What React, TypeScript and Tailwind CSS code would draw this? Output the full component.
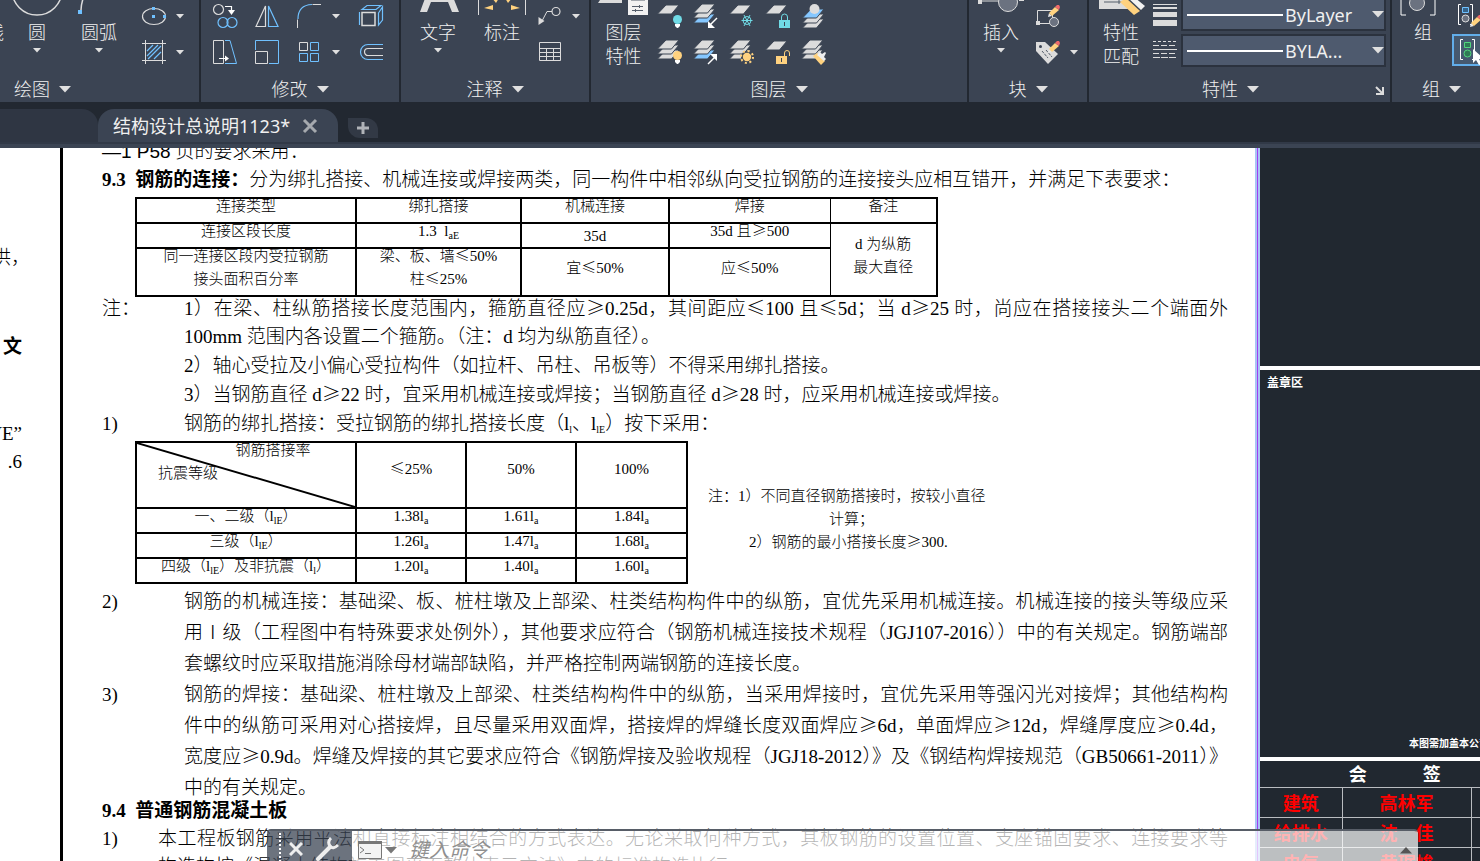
import type { ReactNode } from "react"

const GREY = "#dcdcdc"
const BLUE = "#70c1ff"
const SKY = "#85c7ff"
const AMBER = "#ffd27f"
const CYAN = "#70dbe6"
const BG = "#3b4453"

function Caret({ big = false }: { big?: boolean }) {
    return big ? (
        <svg width="12" height="7" viewBox="0 0 12 7" className="shrink-0"><path d="M0 0h12L6 6.500z" fill="#e0e0e0" /></svg>
    ) : (
        <svg width="8" height="5" viewBox="0 0 8 5" className="shrink-0"><path d="M0 0h8L4 4.500z" fill="#e0e0e0" /></svg>
    )
}

function Icon({ children }: { children: ReactNode }) {
    return (
        <svg width="24" height="24" viewBox="0 0 24 24" fill="none" className="shrink-0 overflow-visible" aria-hidden="true">
            {children}
        </svg>
    )
}

function Tool({ label, className = "w-9", children }: { label: string; className?: string; children: ReactNode }) {
    return (
        <button type="button" aria-label={label} className={`flex h-9 shrink-0 items-center justify-center ${className}`}>
            {children}
        </button>
    )
}

function BigTool({ lines, className, caret = false, children }: { lines: string[]; className: string; caret?: boolean; children?: ReactNode }) {
    return (
        <button type="button" className={`flex shrink-0 flex-col items-center ${className}`}>
            <svg width="60" height="22" viewBox="-30 -2 60 22" fill="none" className="shrink-0" aria-hidden="true">{children}</svg>
            {lines.map((line) => (
                <span key={line} className="block whitespace-nowrap text-lg leading-6">{line}</span>
            ))}
            {caret && <span className="mt-1"><Caret /></span>}
        </button>
    )
}

function Panel({ title, className, titleClass = "justify-center", children, launcher = false }: { title: string; className: string; titleClass?: string; children: ReactNode; launcher?: boolean }) {
    return (
        <section className={`flex h-[102px] shrink-0 flex-col overflow-hidden bg-[#3b4453] ${className}`}>
            <div className="-mt-0.5 flex h-[72px] shrink-0 items-start">{children}</div>
            <div className="relative flex h-8 items-center pt-1.5">
                <button type="button" className={`flex flex-1 items-center gap-[9px] text-lg leading-6 ${titleClass}`}>
                    {title}
                    <Caret big />
                </button>
                {launcher && (
                    <button type="button" aria-label="特性设置" className="absolute right-1.5 top-4">
                        <svg width="9" height="9" viewBox="0 0 9 9" fill="none" stroke={GREY} strokeWidth="2"><path d="M1 1l6 6M8 1v7H1" /></svg>
                    </button>
                )}
            </div>
        </section>
    )
}

// one slanted layer sheet, dy pushes it down the stack
function Sheet({ dy = 0, fill = GREY }: { dy?: number; fill?: string }) {
    return <path d={`M8 ${dy}h13l-7.500 9h-14z`} fill={fill} stroke={BG} strokeWidth="1" />
}

function Sheets({ top = GREY, bottom = GREY }: { top?: string; bottom?: string }) {
    return (
        <>
            <Sheet dy={10} fill={bottom} />
            <Sheet dy={5} />
            <Sheet dy={0} fill={top} />
        </>
    )
}

function Bulb({ fill }: { fill: string }) {
    return (
        <>
            <circle cx="19.500" cy="15.500" r="4.500" fill={fill} />
            <path d="M17 20h5v2l-2 2h-1l-2-2z" fill="#fff" />
        </>
    )
}

function Pencil({ x, y }: { x: number; y: number }) {
    return (
        <g transform={`translate(${x} ${y})`}>
            <path d="M0 12l1-4 3 3z" fill="#e8e8e8" />
            <path d="M1 8l6-6 4 3-7 6z" fill={AMBER} />
            <path d="M7 2l2-2h2l1 2-1 3z" fill="#f06a6a" />
        </g>
    )
}

function DrawPanel() {
    return (
        <Panel title="绘图" className="w-[199px]" titleClass="pl-3.5">
            <div className="flex w-[137px] shrink-0">
                <BigTool lines={["直线"]} className="-ml-8 w-9" />
                <BigTool lines={["圆"]} className="w-[66px]" caret>
                    <circle cx="0" cy="-10" r="25" stroke={GREY} strokeWidth="1.500" />
                </BigTool>
                <BigTool lines={["圆弧"]} className="w-[58px]" caret>
                    <path d="M-15-4Q-18 4-18 10" stroke={GREY} strokeWidth="1.500" />
                    <path d="M-21 10h4v4h-4z" fill={BLUE} />
                </BigTool>
            </div>
            <div className="grid grid-cols-[34px_18px]">
                <Tool label="椭圆" className="w-[34px]">
                    <Icon>
                        <ellipse cx="12" cy="12.500" rx="11.500" ry="8" stroke={GREY} strokeWidth="1.200" />
                        <path d="M10 3h3v3h-3zM10 11h3v3h-3zM21 11h3v3h-3z" fill={BLUE} />
                    </Icon>
                </Tool>
                <Tool label="椭圆选项" className="w-[18px]"><Caret /></Tool>
                <Tool label="图案填充" className="w-[34px]">
                    <Icon>
                        <path d="M0 3.500h24M0 20.500h24M3.500 0v24M20.500 0v24" stroke={GREY} />
                        <path d="M5 11l6-6M5 16L16 5M6 19L19 6M12 19l7-7" stroke={BLUE} strokeWidth="1.200" />
                    </Icon>
                </Tool>
                <Tool label="填充选项" className="w-[18px]"><Caret /></Tool>
            </div>
        </Panel>
    )
}

function ModifyPanel() {
    return (
        <Panel title="修改" className="w-[198px]">
            <div className="ml-1 grid grid-cols-[40px_44px_40px_14px_56px]">
                <Tool label="复制" className="w-10">
                    <Icon>
                        <circle cx="5.500" cy="5.500" r="5" stroke={GREY} strokeWidth="1.200" />
                        <circle cx="10" cy="18.500" r="5" stroke={BLUE} strokeWidth="1.200" />
                        <circle cx="19" cy="18.500" r="5" stroke={BLUE} strokeWidth="1.200" />
                        <path d="M12 2.500h6.500V8" stroke="#fff" strokeWidth="1.200" />
                        <path d="M15 6h7l-3.500 5z" fill="#fff" />
                    </Icon>
                </Tool>
                <Tool label="镜像" className="w-11">
                    <Icon>
                        <path d="M1 22.500L10.500 2v20.500z" stroke={GREY} strokeWidth="1.200" />
                        <path d="M13.500 2l9.500 20.500h-9.500z" stroke={BLUE} strokeWidth="1.200" />
                    </Icon>
                </Tool>
                <Tool label="圆角" className="w-10">
                    <Icon>
                        <path d="M1 15Q1 1 15 .500" stroke={BLUE} strokeWidth="1.200" />
                        <path d="M.500 15.500V24M15.500 .500H24" stroke={GREY} />
                    </Icon>
                </Tool>
                <Tool label="圆角选项" className="w-3.5"><Caret /></Tool>
                <Tool label="分解" className="w-14">
                    <Icon>
                        <path d="M3 8.500h13v13H3z" stroke={GREY} strokeWidth="1.500" />
                        <path d="M.500 21V8M3 5.500L8 1.500h14L17 5.500zM19.500 9l4-6v13l-4 5z" stroke={BLUE} strokeWidth="1.200" />
                    </Icon>
                </Tool>
                <Tool label="拉伸" className="w-10">
                    <Icon>
                        <path d="M.500 .500h10v23H.500z" stroke={GREY} />
                        <path d="M12 .500h5l6.500 23H12" stroke={BLUE} />
                        <path d="M6 18.500h7" stroke="#fff" />
                        <path d="M12 15.500l4 3-4 3z" fill="#fff" />
                    </Icon>
                </Tool>
                <Tool label="缩放" className="w-11">
                    <Icon>
                        <path d="M.500 10V.500h23v23H14" stroke={BLUE} />
                        <path d="M.500 11.500h12v12H.500z" stroke={GREY} />
                    </Icon>
                </Tool>
                <Tool label="阵列" className="w-10">
                    <Icon>
                        <path d="M2.500 2.500h8v8h-8z" stroke={GREY} />
                        <path d="M13.500 2.500h8v8h-8zM2.500 13.500h8v8h-8zM13.500 13.500h8v8h-8z" stroke={BLUE} />
                    </Icon>
                </Tool>
                <Tool label="阵列选项" className="w-3.5"><Caret /></Tool>
                <Tool label="偏移" className="w-14">
                    <Icon>
                        <path d="M24 4.500H9a7.500 7.500 0 0 0 0 15h15" stroke={BLUE} strokeWidth="1.200" />
                        <path d="M24 8.500H9a3.500 3.500 0 0 0 0 7h15" stroke={GREY} strokeWidth="1.200" />
                    </Icon>
                </Tool>
            </div>
        </Panel>
    )
}

function AnnotatePanel() {
    return (
        <Panel title="注释" className="w-[188px]">
            <BigTool lines={["文字"]} className="ml-1 w-[66px]" caret>
                <path d="M-18 12L-7-18H9L21 12h-7L10 2H-7l-4 10z" fill={GREY} />
                <path d="M-5-3H8L3-16H0z" fill={BG} />
            </BigTool>
            <BigTool lines={["标注"]} className="w-[62px]">
                <path d="M-23.500-2v17M23.500-2v17" stroke={GREY} />
                <path d="M-18 8l9-3v5zM18 8L9 5v5zM-10-2h7l-3 5zM3-2h7L6 3z" fill={AMBER} />
            </BigTool>
            <div className="grid grid-cols-[34px_18px]">
                <Tool label="引线" className="w-[34px]">
                    <Icon>
                        <circle cx="18" cy="7.500" r="4" stroke={GREY} strokeWidth="1.200" />
                        <path d="M14 7.500H9L4 17" stroke={GREY} />
                        <path d="M.500 21V13l6 4z" fill={GREY} />
                    </Icon>
                </Tool>
                <Tool label="引线选项" className="w-[18px]"><Caret /></Tool>
                <Tool label="表格" className="w-[34px]">
                    <Icon>
                        <path d="M1.500 2.500h21v18h-21zM2 8.500h20M2 12.500h20M2 16.500h20M8.500 8v12M15.500 8v12" stroke={GREY} />
                    </Icon>
                </Tool>
            </div>
        </Panel>
    )
}

function Snow() {
    return (
        <>
            <circle cx="17" cy="16.500" r="4" stroke={CYAN} />
            <path d="M11.500 16.500h11M14 11l6 11M20 11l-6 11" stroke={CYAN} />
        </>
    )
}

function LayerPanel() {
    const tools: [string, ReactNode][] = [
        ["关闭图层", <><Sheet dy={1} /><Bulb fill={CYAN} /></>],
        ["隔离图层", <><Sheets bottom={SKY} /><path d="M23 14l-7 7" stroke="#fff" strokeWidth="1.500" /><path d="M14 17v7h7z" fill="#fff" /></>],
        ["冻结图层", <><Sheet dy={1} /><Snow /></>],
        ["锁定图层", <><Sheet dy={1} /><path d="M13 16h11v8H13z" fill={CYAN} /><path d="M15.500 16v-3a3 3 0 0 1 6 0v3" stroke={CYAN} /><path d="M18.500 18v4" stroke={BG} /></>],
        ["置为当前", <><g transform="translate(1 5)"><Sheets top={SKY} /></g><circle cx="12.500" cy="5" r="5" fill={GREY} /></>],
        ["打开图层", <><Sheets /><Bulb fill={AMBER} /></>],
        ["取消隔离", <><Sheets bottom={SKY} /><path d="M14 24l7-7" stroke="#fff" strokeWidth="1.500" /><path d="M16 14h7v7z" fill="#fff" /></>],
        ["解冻图层", <><Sheets /><circle cx="17" cy="17" r="6" fill={BG} /><circle cx="17" cy="17" r="6" stroke={AMBER} strokeWidth="2" strokeDasharray="2 2.700" /><circle cx="17" cy="17" r="4.200" fill={AMBER} /></>],
        ["解锁图层", <><Sheet dy={1} /><path d="M10 16h11v8H10z" fill={AMBER} /><path d="M18.500 16v-3a2.500 2.500 0 0 1 5 0v3" stroke={AMBER} /><path d="M15.500 18v4" stroke={BG} /></>],
        ["匹配图层", <><Sheets /><path d="M11 16l4-3 8 8-4 4z" fill={AMBER} /><path d="M15 15l3-3 2 2 3-2 1 1-2 4 2 2-2 2z" fill="#eee" /></>],
    ]
    return (
        <Panel title="图层" className="w-[376px]">
            <BigTool lines={["图层", "特性"]} className="w-[61px] pl-1">
                <path d="M-26 3l4-6h20v6z" fill={GREY} />
                <path d="M4-4h20v19H4z" fill="#f2f2f2" />
                <path d="M7 0h14M8 6.500h11M8 10.500h11M15.500 5v3M11.500 9v3" stroke="#555e6b" />
            </BigTool>
            <div className="grid grid-cols-5">
                {tools.map(([label, icon]) => (
                    <Tool key={label} label={label}><Icon>{icon}</Icon></Tool>
                ))}
            </div>
        </Panel>
    )
}

function BlockPanel() {
    return (
        <Panel title="块" className="w-[118px]">
            <BigTool lines={["插入"]} className="w-16" caret>
                <path d="M-21 1H5" stroke={GREY} />
                <path d="M-23-1h4v5h-4zM18-2h5v3h-5z" fill={GREY} />
                <circle cx="7" cy="2" r="9.500" fill="#6b7280" stroke={GREY} />
            </BigTool>
            <div className="grid grid-cols-[30px_22px]">
                <Tool label="编辑块" className="w-[30px]">
                    <Icon>
                        <path d="M1.500 6.500h15v13h-15z" stroke={GREY} />
                        <path d="M0 17h4v4H0z" fill={GREY} />
                        <circle cx="18" cy="18" r="4.500" fill="#6b7280" stroke={GREY} />
                        <Pencil x={12} y={1} />
                    </Icon>
                </Tool>
                <span />
                <Tool label="编辑属性" className="w-[30px]">
                    <Icon>
                        <path d="M0 2h9l13 12-10 10L0 11z" fill={GREY} />
                        <circle cx="4.500" cy="6.500" r="1.500" fill={BG} />
                        <path d="M6 11l6 7M10 10l6 7" stroke="#555e6b" strokeDasharray="3 1" />
                        <Pencil x={12} y={1} />
                    </Icon>
                </Tool>
                <Tool label="属性选项" className="w-[22px]"><Caret /></Tool>
            </div>
        </Panel>
    )
}

function LineSelect({ label, value }: { label: string; value: string }) {
    return (
        <div className="relative flex h-[33px] items-center border-2 border-[#2b323e] bg-[#4e5a6e]">
            <span className="pointer-events-none absolute left-1 h-0.5 w-24 bg-white" />
            <select aria-label={label} className="h-full w-full appearance-none bg-transparent pl-[102px] text-lg font-normal leading-6 text-[#f0f0f0]">
                <option>{value}</option>
            </select>
            <span className="pointer-events-none absolute right-0"><Caret big /></span>
        </div>
    )
}

function PropertiesPanel() {
    return (
        <Panel title="特性" className="w-[301px]" titleClass="justify-center pr-[18px]" launcher>
            <BigTool lines={["特性", "匹配"]} className="w-16">
                <path d="M-22-3H6L9 9h-31z" fill={GREY} />
                <path d="M-17 2H2M-2-1v5" stroke="#555e6b" />
                <path d="M-1 2l6-4L19 11l-6 4z" fill={AMBER} />
                <path d="M6-3h7l11 9-4 4z" fill="#f2f2f2" />
            </BigTool>
            <div className="flex w-7 flex-col">
                <Tool label="线宽" className="w-6">
                    <Icon><path d="M0 0h24v1H0zM0 3h24v2H0zM0 8h24v5H0zM0 16h24v6H0z" fill={GREY} /></Icon>
                </Tool>
                <Tool label="线型" className="w-6">
                    <Icon>
                        <path d="M0 1.500h24" stroke={GREY} strokeDasharray="3 2" />
                        <path d="M0 5.500h24M0 13.500h24" stroke={GREY} strokeDasharray="6 2" />
                        <path d="M0 9.500h24" stroke={GREY} />
                        <path d="M0 17.500h24" stroke={GREY} strokeDasharray="7 1" />
                    </Icon>
                </Tool>
            </div>
            <div className="flex flex-1 flex-col gap-[3px] pr-1">
                <LineSelect label="线宽" value="ByLayer" />
                <LineSelect label="线型" value="BYLA..." />
            </div>
        </Panel>
    )
}

function GroupPanel() {
    return (
        <Panel title="组" className="min-w-[88px] flex-1" titleClass="pl-[30px]">
            <BigTool lines={["组"]} className="ml-0.5 w-[58px]">
                <path d="M-17-2h-5v17h5M7-2h5v17H7" stroke="#fff" />
                <circle cx="-6" cy="3" r="7.500" fill="#6b7280" stroke={GREY} />
            </BigTool>
            <div className="flex shrink-0 flex-col">
                <Tool label="编辑组" className="w-10">
                    <Icon>
                        <path d="M1 .500H-1.500v20H1M10 .500h2.500v20H10" stroke="#fff" />
                        <path d="M2.500 3.500h6v5h-6z" fill="#35638a" stroke={BLUE} />
                        <circle cx="5.500" cy="14.500" r="3.500" fill="#6b7280" stroke={GREY} />
                        <Pencil x={10} y={11} />
                    </Icon>
                </Tool>
                <button type="button" aria-label="启用组选择" className="flex h-8 w-10 items-center justify-center border-2 border-[#62aeea] bg-[#46596f]">
                    <Icon>
                        <path d="M3 1.500H.500v20H3M12 1.500h2.500v20H12" stroke="#fff" />
                        <path d="M4.500 4.500h6v5h-6z" fill="#2f7a55" stroke="#52d67e" />
                        <circle cx="7.500" cy="15.500" r="3.500" fill="#2f7a55" stroke="#52d67e" />
                        <path d="M13 11v14l3-3 3 5 3-1-3-5h5z" fill="#fff" />
                    </Icon>
                </button>
            </div>
        </Panel>
    )
}

function Tabs() {
    return (
        <nav className="flex h-10 items-end bg-[#222831] text-lg text-[#f0f0f0]">
            <button type="button" aria-label="上一图形" className="h-[33px] w-[98px] rounded-tr-2xl bg-[#2f3643]" />
            <div className="flex h-[33px] items-center gap-3 rounded-t-2xl bg-[#3b4453] pl-[15px] pr-5">
                <button type="button" className="whitespace-nowrap font-normal leading-6">结构设计总说明1123*</button>
                <button type="button" aria-label="关闭">
                    <svg width="16" height="16" viewBox="0 0 16 16" stroke="#a5a9ae" strokeWidth="3"><path d="M2 2l12 12M14 2L2 14" /></svg>
                </button>
            </div>
            <button type="button" aria-label="新图形" className="mb-1 ml-2.5 flex h-5 w-[30px] items-center justify-center rounded-bl-xl rounded-tr-xl bg-[#323945]">
                <svg width="12" height="12" viewBox="0 0 12 12" stroke="#b0b3b8" strokeWidth="3"><path d="M6 0v12M0 6h12" /></svg>
            </button>
        </nav>
    )
}

// comparison signs take a full em in this text
function T({ children }: { children: string }) {
    return (
        <>
            {children.split(/([≥≤])/).map((part, i) =>
                part === "≥" || part === "≤" ? <span key={i} className="font-['Noto_Sans_CJK_SC',sans-serif] leading-[0]">{part}</span> : part
            )}
        </>
    )
}

function Full({ children }: { children: string }) {
    return <span className="block whitespace-nowrap [text-align-last:justify]"><T>{children}</T></span>
}

function Item({ label, className = "w-[82px]", children }: { label?: string; className?: string; children: ReactNode }) {
    return (
        <div className="flex">
            <span className={`shrink-0 ${className}`}>{label}</span>
            <p className="min-w-0 flex-1 whitespace-nowrap">{children}</p>
        </div>
    )
}

function Sub({ children }: { children: string }) {
    return <sub className="text-[10px]">{children}</sub>
}

const cell = "border-2 border-black p-0 font-light"

function ConnectionTable() {
    return (
        <table className="ml-[33px] w-[802px] table-fixed border-collapse text-center text-[15px] leading-[14px]">
            <colgroup>
                <col className="w-[220px]" />
                <col className="w-[165px]" />
                <col className="w-[148px]" />
                <col className="w-[161px]" />
                <col className="w-[107px]" />
            </colgroup>
            <tbody>
                <tr className="h-[25px] align-top">
                    <th className={cell}>连接类型</th>
                    <th className={cell}>绑扎搭接</th>
                    <th className={cell}>机械连接</th>
                    <th className={`${cell} border-r`}>焊接</th>
                    <th className={`${cell} border-l`}>备注</th>
                </tr>
                <tr className="h-[25px] align-top">
                    <td className={cell}>连接区段长度</td>
                    <td className={cell}>1.3&nbsp; l<Sub>aE</Sub></td>
                    <td className={`${cell} align-middle`}>35d</td>
                    <td className={`${cell} border-r`}><T>35d 且≥500</T></td>
                    <td rowSpan={2} className={`${cell} border-l align-middle`}>
                        <div className="mb-2 flex flex-col gap-[9px]"><span>d 为纵筋</span><span>最大直径</span></div>
                    </td>
                </tr>
                <tr className="h-12 align-top">
                    <td className={cell}>
                        <div className="flex flex-col gap-[9px]"><span>同一连接区段内受拉钢筋</span><span>接头面积百分率</span></div>
                    </td>
                    <td className={cell}>
                        <div className="flex flex-col gap-[9px]"><span><T>梁、板、墙≤50%</T></span><span><T>柱≤25%</T></span></div>
                    </td>
                    <td className={cell}><div className="pt-3"><T>宜≤50%</T></div></td>
                    <td className={`${cell} border-r`}><div className="pt-3"><T>应≤50%</T></div></td>
                </tr>
            </tbody>
        </table>
    )
}

const lapRows: [ReactNode, string, string, string][] = [
    [<>一、二级（l<Sub>lE</Sub>）</>, "1.38", "1.61", "1.84"],
    [<>三级（l<Sub>lE</Sub>）</>, "1.26", "1.47", "1.68"],
    [<>四级（l<Sub>lE</Sub>）及非抗震（l<Sub>l</Sub>）</>, "1.20", "1.40", "1.60"],
]

function LapTable() {
    return (
        <table className="ml-[33px] w-[552px] shrink-0 table-fixed border-collapse text-center text-[15px] leading-[14px]">
            <colgroup>
                <col className="w-[220px]" />
                <col className="w-[110px]" />
                <col className="w-[110px]" />
                <col className="w-[111px]" />
            </colgroup>
            <tbody>
                <tr className="h-[66px]">
                    <th className={`${cell} relative align-top`}>
                        <svg className="absolute inset-0 h-full w-full" viewBox="0 0 220 66" preserveAspectRatio="none"><path d="M0 0l220 66" stroke="#000" strokeWidth="2" /></svg>
                        <div className="flex flex-col gap-[9px]">
                            <span className="pl-[54px]">钢筋搭接率</span>
                            <span className="pr-[116px]">抗震等级</span>
                        </div>
                    </th>
                    {["≤25%", "50%", "100%"].map((h) => (
                        <th key={h} className={cell}><div className="pb-3"><T>{h}</T></div></th>
                    ))}
                </tr>
                {lapRows.map(([grade, ...values], i) => (
                    <tr key={i} className="h-[25px] align-top">
                        <td className={cell}>{grade}</td>
                        {values.map((v) => <td key={v} className={cell}>{v}l<Sub>a</Sub></td>)}
                    </tr>
                ))}
            </tbody>
        </table>
    )
}

function Sheet93() {
    return (
        <article className="min-w-0 flex-1 overflow-hidden pl-[39px] pr-[27px] text-[19px]">
            <p className="-mt-2.5 leading-7"><span className="font-['Liberation_Sans',sans-serif]">—1 P58</span> 页的要求采用：</p>
            <p className="whitespace-nowrap pb-[3px] leading-7"><b className="font-bold">9.3&nbsp; 钢筋的连接：</b>分为绑扎搭接、机械连接或焊接两类，同一构件中相邻纵向受拉钢筋的连接接头应相互错开，并满足下表要求：</p>
            <ConnectionTable />
            <div className="-mt-0.5 flex flex-col gap-px leading-7">
                <Item label="注：">
                    <Full>1）在梁、柱纵筋搭接长度范围内，箍筋直径应≥0.25d，其间距应≤100 且≤5d；当 d≥25 时，尚应在搭接接头二个端面外</Full>
                    100mm 范围内各设置二个箍筋。（注：d 均为纵筋直径）。
                </Item>
                <Item>2）轴心受拉及小偏心受拉构件（如拉杆、吊柱、吊板等）不得采用绑扎搭接。</Item>
                <Item><T>3）当钢筋直径 d≥22 时，宜采用机械连接或焊接；当钢筋直径 d≥28 时，应采用机械连接或焊接。</T></Item>
                <Item label="1)">钢筋的绑扎搭接：受拉钢筋的绑扎搭接长度（l<Sub>l</Sub>、l<Sub>lE</Sub>）按下采用：</Item>
            </div>
            <div className="mt-[3px] flex items-center gap-5">
                <LapTable />
                <div className="whitespace-nowrap pt-3.5 text-[15px] leading-[23px]">
                    <p>注：1）不同直径钢筋搭接时，按较小直径</p>
                    <p className="pl-[121px]">计算；</p>
                    <p className="pl-[41px]"><T>2）钢筋的最小搭接长度≥300.</T></p>
                </div>
            </div>
            <div className="mt-0.5 leading-[31px]">
                <Item label="2)">
                    <Full>钢筋的机械连接：基础梁、板、桩柱墩及上部梁、柱类结构构件中的纵筋，宜优先采用机械连接。机械连接的接头等级应采</Full>
                    <Full>用Ⅰ级（工程图中有特殊要求处例外），其他要求应符合（钢筋机械连接技术规程（JGJ107-2016））中的有关规定。钢筋端部</Full>
                    套螺纹时应采取措施消除母材端部缺陷，并严格控制两端钢筋的连接长度。
                </Item>
                <Item label="3)">
                    <Full>钢筋的焊接：基础梁、桩柱墩及上部梁、柱类结构构件中的纵筋，当采用焊接时，宜优先采用等强闪光对接焊；其他结构构</Full>
                    <Full>件中的纵筋可采用对心搭接焊，且尽量采用双面焊，搭接焊的焊缝长度双面焊应≥6d，单面焊应≥12d，焊缝厚度应≥0.4d，</Full>
                    <Full>宽度应≥0.9d。焊缝及焊接的其它要求应符合《钢筋焊接及验收规程（JGJ18-2012）》及《钢结构焊接规范（GB50661-2011）》</Full>
                    中的有关规定。
                </Item>
            </div>
            <h2 className="font-bold leading-4">9.4&nbsp; 普通钢筋混凝土板</h2>
            <div className="mt-1.5 leading-7">
                <Item label="1)" className="w-14">
                    <Full>本工程板钢筋采用平法和直接标注相结合的方式表达。无论采取何种方式，其板钢筋的设置位置、支座锚固要求、连接要求等</Full>
                    构造构按《混凝土结构施工图平面整体表示方法》中的标准构造执行。
                </Item>
            </div>
        </article>
    )
}

const signers = [["建筑", "高林军"], ["给排水", "沈　佳"], ["电气", "黄琚峻"]]

function TitleBlock() {
    return (
        <aside className="flex w-[220px] shrink-0 flex-col overflow-hidden bg-[#212830] text-white">
            <div className="h-[218px] shrink-0" />
            <div className="flex h-[395px] shrink-0 flex-col justify-between border-y-4 border-white px-[7px] pb-0.5 pt-[3px] text-xs font-bold leading-5">
                <p>盖章区</p>
                <p className="whitespace-nowrap pl-[142px] text-[10px] leading-6">本图需加盖本公司</p>
            </div>
            <table className="w-[242px] shrink-0 table-fixed border-collapse text-center text-lg font-bold leading-7">
                <colgroup>
                    <col className="w-[82px]" />
                    <col className="w-[129px]" />
                    <col />
                </colgroup>
                <tbody>
                    <tr>
                        <th colSpan={3} className="p-0">
                            <div className="flex justify-center gap-14 pl-7 leading-[26px]"><span>会</span><span>签</span></div>
                        </th>
                    </tr>
                    {signers.map(([role, name]) => (
                        <tr key={role} className="h-[30px] text-[#ff0000]">
                            <td className="border border-[#b9bcc0] border-l-0 p-0">{role}</td>
                            <td className="border border-[#b9bcc0] p-0">{name}</td>
                            <td className="border border-[#b9bcc0] p-0" />
                        </tr>
                    ))}
                </tbody>
            </table>
        </aside>
    )
}

function CommandLine() {
    return (
        <form className="absolute bottom-0 left-[267px] right-[62px] flex h-8 overflow-hidden rounded-t border-t-2 border-[#575d67]" onSubmit={(e) => e.preventDefault()}>
            <div className="flex w-[85px] items-center gap-3 bg-[#3b4453]/75 pl-3 pt-1.5">
                <span className="-mr-1 h-8 border-l-2 border-dotted border-white" />
                <button type="button" aria-label="关闭命令行">
                    <svg width="14" height="14" viewBox="0 0 14 14" stroke="#eee" strokeWidth="3"><path d="M1 1l12 12M13 1L1 13" /></svg>
                </button>
                <button type="button" aria-label="自定义">
                    <svg width="24" height="24" viewBox="0 0 24 24" fill="none" stroke="#eee"><path d="M3 22L15 10" strokeWidth="4" strokeLinecap="round" /><path d="M16 1q-4 4-1 8t8-1" strokeWidth="3" /></svg>
                </button>
            </div>
            <div className="flex flex-1 items-center bg-white/70 pl-1.5 pt-2">
                <svg width="24" height="18" viewBox="0 0 24 18" fill="none" stroke="#777" className="shrink-0"><path d="M.500 .500h23v17H.500z" fill="#f3f3f3" /><path d="M0 1.500h24" strokeWidth="3" /><path d="M2 6l4 3-4 3M7 12.500h6" /></svg>
                <svg width="12" height="7" viewBox="0 0 12 7" className="ml-[3px] shrink-0"><path d="M0 0h12L6 6.500z" fill="#777" /></svg>
                <input aria-label="命令" placeholder="键入命令" className="ml-3 min-w-0 flex-1 bg-transparent text-xl italic leading-6 outline-none placeholder:text-[#8f8f8f]" />
                <button type="button" aria-label="历史记录" className="mr-1.5">
                    <svg width="12" height="7" viewBox="0 0 12 7"><path d="M0 6.500h12L6 0z" fill="#555" /></svg>
                </button>
            </div>
        </form>
    )
}

export default function App() {
    return (
        <div className="flex h-screen flex-col overflow-hidden bg-[#222831] font-['Noto_Sans','Noto_Sans_CJK_SC',sans-serif]">
            <header className="flex shrink-0 gap-0.5 overflow-hidden font-light text-[#f0f0f0]">
                <DrawPanel />
                <ModifyPanel />
                <AnnotatePanel />
                <LayerPanel />
                <BlockPanel />
                <PropertiesPanel />
                <GroupPanel />
            </header>
            <div className="shrink-0 border-b-4 border-[#3b4453] bg-[#313947] pb-0.5 font-light"><Tabs /></div>
            <main className="relative flex min-h-0 flex-1 overflow-hidden">
                <div className="flex min-w-0 flex-1 overflow-hidden bg-white font-['Liberation_Serif','Noto_Sans_CJK_SC',serif] font-light text-black">
                    <div className="flex w-[60px] shrink-0 flex-col items-end overflow-hidden whitespace-nowrap pr-[38px] pt-24 text-[19px] leading-7">
                        <span className="-mr-2">供，</span>
                        <span className="mt-[61px] font-bold">文</span>
                        <span className="mt-[59px]">VE”</span>
                        <span>.6</span>
                    </div>
                    <div className="w-[3px] shrink-0 bg-black" />
                    <Sheet93 />
                </div>
                <div className="w-[5px] shrink-0 border-x-2 border-[#a9c4f5] bg-[#a040f0]" />
                <TitleBlock />
                <CommandLine />
            </main>
        </div>
    )
}
